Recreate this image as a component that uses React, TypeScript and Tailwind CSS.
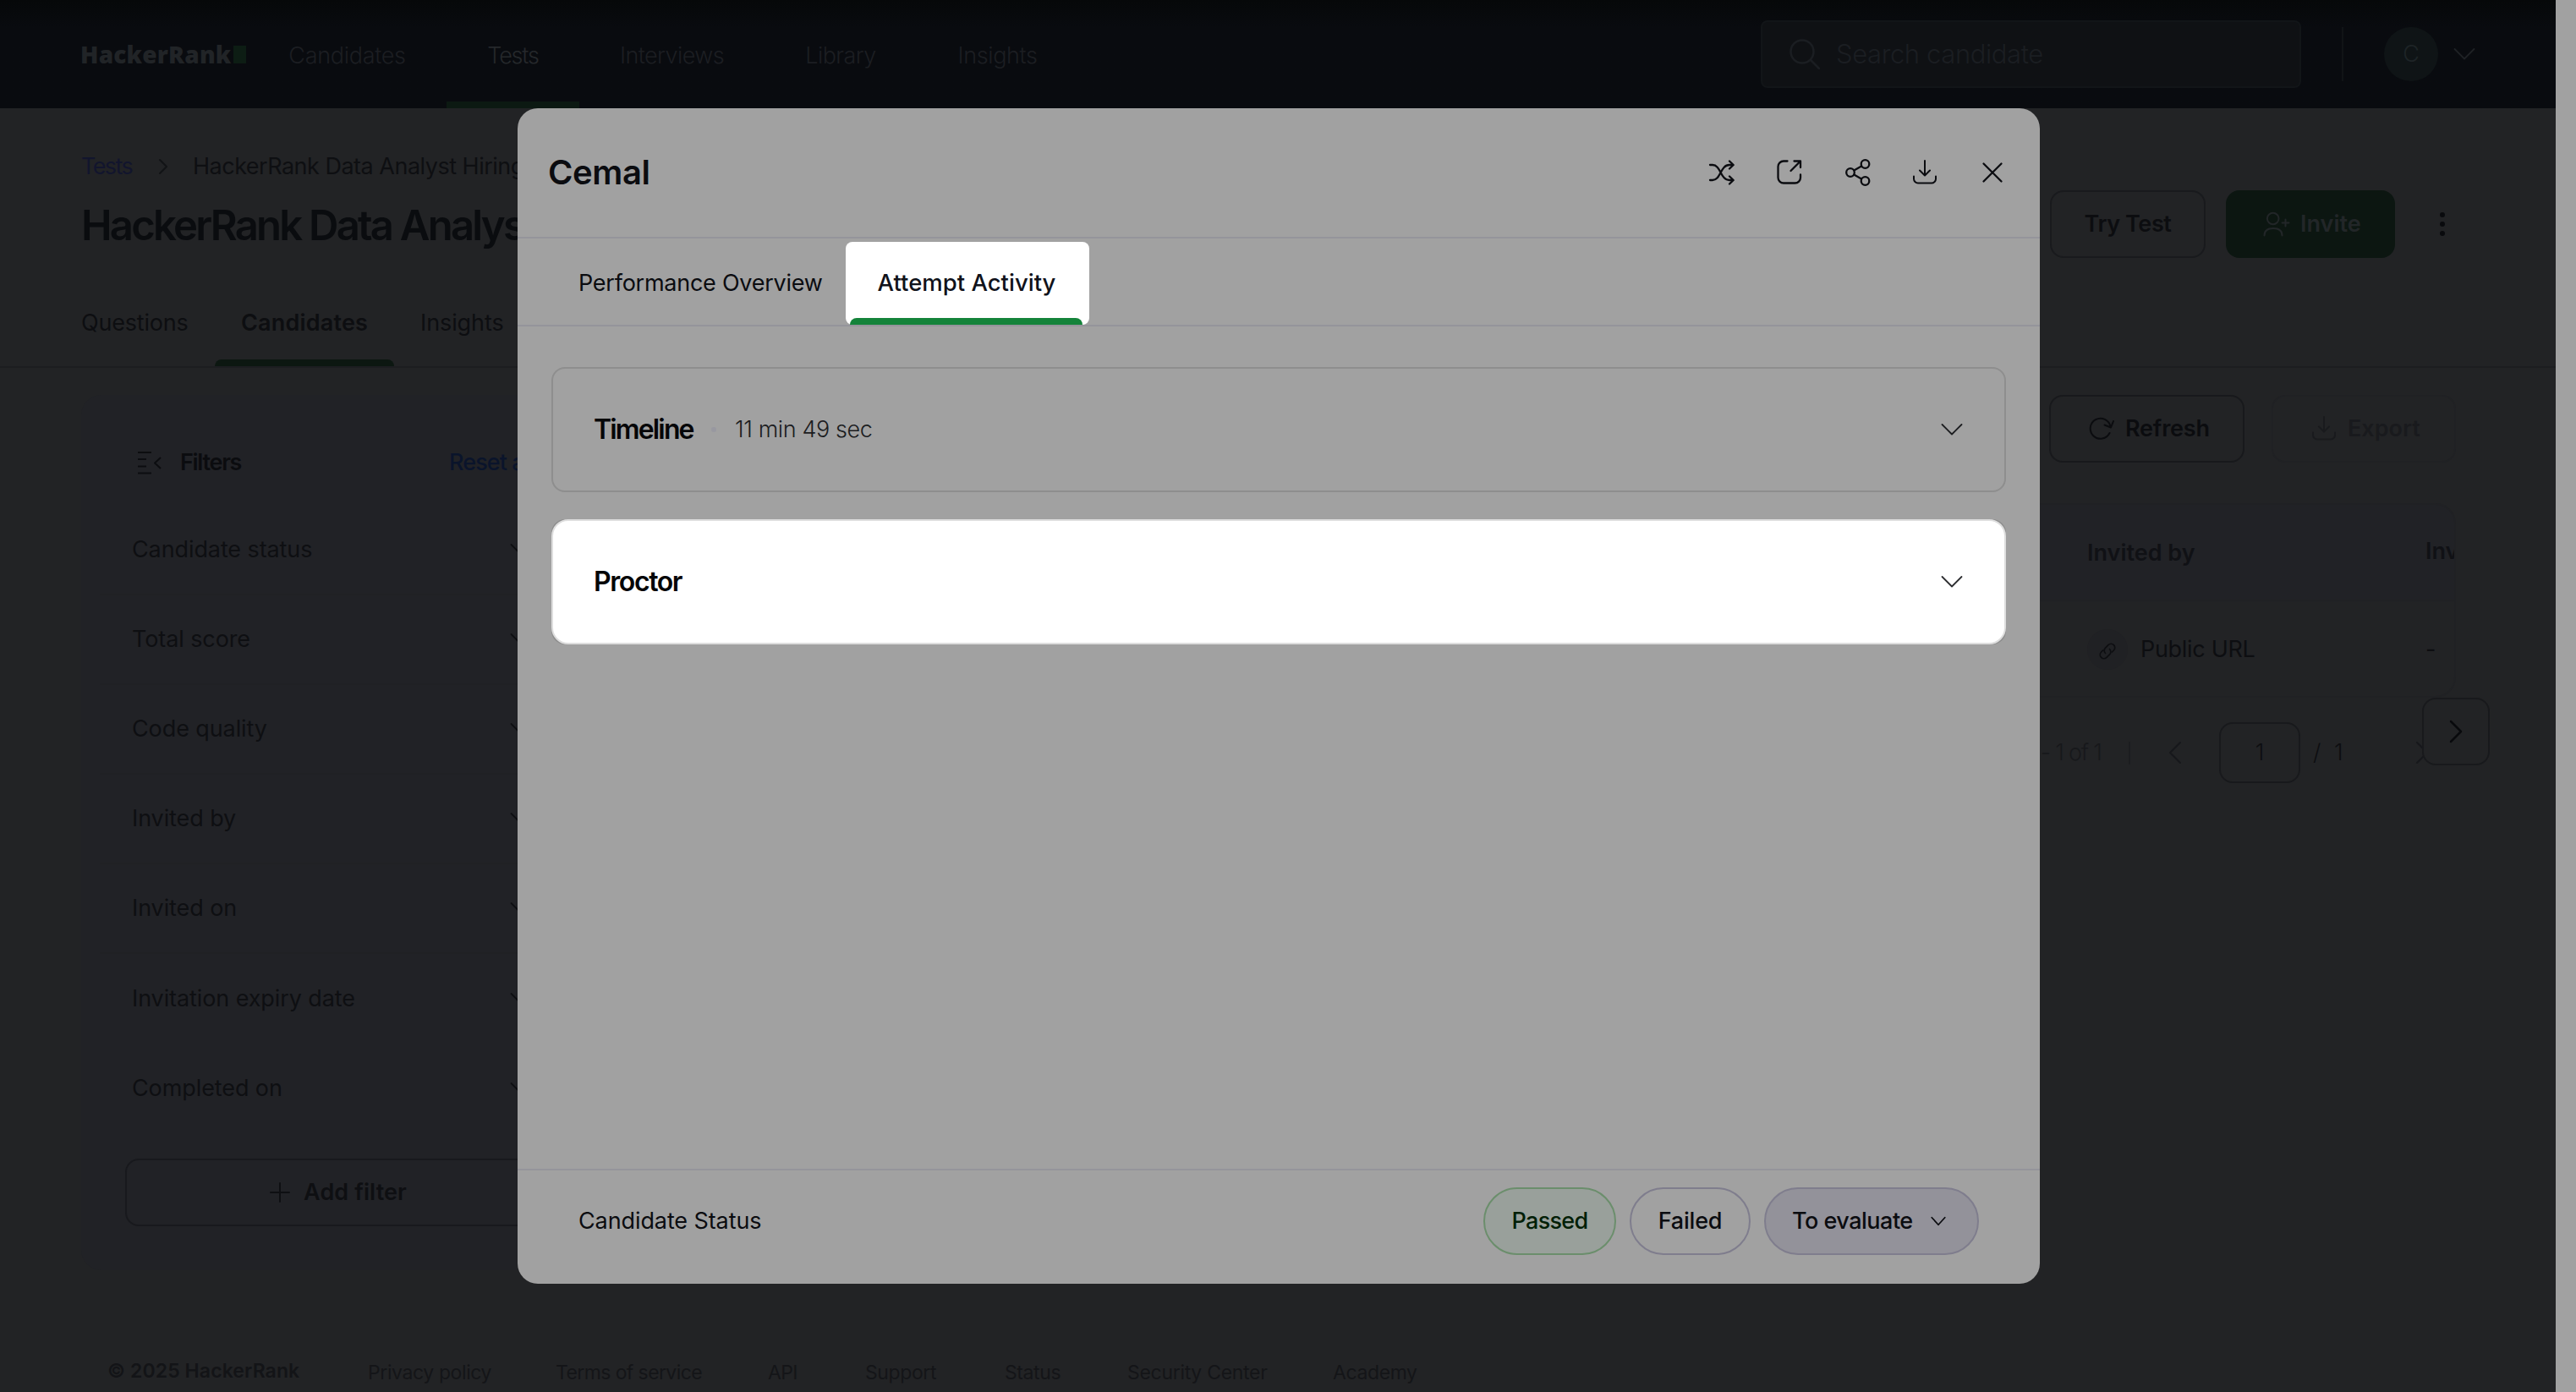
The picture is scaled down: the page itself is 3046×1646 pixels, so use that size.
import type { ReactNode } from "react";

type IconProps = { className?: string; children: ReactNode; box?: string };

function Icon({ className = "", children, box = "0 0 32 32" }: IconProps) {
  return (
    <svg viewBox={box} className={"shrink-0 " + className} fill="none" stroke="currentColor" strokeWidth="2" strokeLinecap="round" strokeLinejoin="round">
      {children}
    </svg>
  );
}

function ChevronDown({ className }: { className: string }) {
  return (
    <Icon className={className} box="0 0 28 16">
      <path d="M2.500 2l11.500 11.500L25.500 2" strokeWidth="1.800" />
    </Icon>
  );
}

function DownloadIcon({ className }: { className: string }) {
  return (
    <Icon className={className}>
      <path d="M16 2v17M10 13.500l6 6 6-6M3 20.500v3a5 5 0 0 0 5 5h16a5 5 0 0 0 5-5v-3" />
    </Icon>
  );
}

const navItems = [
  { label: "Candidates", box: "w-[235px] tracking-[-0.3px]", active: false },
  { label: "Tests", box: "w-[157px] tracking-[-1.2px]", active: true },
  { label: "Interviews", box: "w-[219px] tracking-[-0.6px]", active: false },
  { label: "Library", box: "w-[180px] tracking-[-0.6px]", active: false },
  { label: "Insights", box: "w-[191px] tracking-[-0.4px]", active: false },
];

function TopBar() {
  return (
    <header className="flex h-32 shrink-0 items-center bg-[#090b0e] bg-linear-to-b from-[#060809] to-[#090b0f] to-25% pl-[95px] text-[#1c1e22]">
      <div className="flex w-[198px] shrink-0 items-center">
        <span className="w-[181px] font-['Open_Sans'] text-[28px] leading-8 font-extrabold tracking-[0.2px] whitespace-nowrap text-[#212427]">HackerRank</span>
        <span className="h-[21px] w-[15px] bg-[#0d1d14]" />
      </div>
      <nav className="flex h-full">
        {navItems.map((item) => (
          <div key={item.label} className={"relative flex items-center justify-center pt-1 font-light " + item.box + (item.active ? " text-[#25282b]" : "")}>
            {item.label}
            {item.active && <span className="absolute inset-x-0 bottom-0 h-2 bg-[#0c1912]" />}
          </div>
        ))}
      </nav>
      <div className="ml-auto flex items-center">
        <div className="flex h-20 w-[639px] items-center gap-[19px] rounded-lg border-2 border-[#121518] bg-[#0f1114] pl-8">
          <Icon className="h-9 w-9 text-[#1b1e22]" box="0 0 36 36">
            <circle cx="15" cy="15" r="13.500" strokeWidth="2.500" />
            <path d="M25 25l10 10" strokeWidth="2.500" />
          </Icon>
          <span className="text-[31px] font-light tracking-[-0.4px] text-[#1b1e22]">Search candidate</span>
        </div>
        <span className="ml-12 h-16 w-[2px] bg-[#111416]" />
        <span className="ml-12 flex h-16 w-16 items-center justify-center rounded-full bg-[#0f1416] font-light text-[#1e2427]">C</span>
        <ChevronDown className="mr-[94px] ml-[17px] h-4 w-7 text-[#1f2225]" />
      </div>
    </header>
  );
}

function PageHeader() {
  return (
    <section className="flex h-[307px] shrink-0 flex-col border-b-2 border-[#1c1d20] pl-24">
      <div className="mt-[49px] flex h-10 items-center tracking-[-0.5px] whitespace-nowrap">
        <span className="w-[63px] tracking-[-1.6px] text-[#12152d]">Tests</span>
        <Icon className="ml-7 h-5 w-3" box="0 0 12 20">
          <path d="M2 2l8 8-8 8" stroke="#121316" />
        </Icon>
        <span className="ml-[29px] text-[#0e0f12]">HackerRank Data Analyst Hiring Test</span>
      </div>
      <div className="mt-2 flex h-20 items-center">
        <h1 className="mt-1 w-[2328px] overflow-hidden text-[49px] leading-[64px] font-semibold tracking-[-2.750px] whitespace-nowrap text-[#0a0c0f]">HackerRank Data Analyst Hiring Test</h1>
        <div className="flex h-20 w-[184px] shrink-0 items-center justify-center rounded-2xl border-2 border-[#191a1d] font-semibold tracking-[-0.4px] text-[#0c0d10]">Try Test</div>
        <div className="ml-6 flex h-20 w-[200px] shrink-0 items-center rounded-2xl bg-[#0c1611] pl-[42px] font-semibold text-[#222628]">
          <Icon className="h-8 w-8 overflow-visible">
            <circle cx="13.700" cy="9.500" r="6.800" />
            <path d="M3.500 29.500c0-5.500 4-8.500 10.500-8.500s10.500 3 10.500 8.500M24.500 14.500h8M28.500 10.500v8" />
          </Icon>
          <span className="ml-[14px]">Invite</span>
        </div>
        <div className="ml-[53px] flex flex-col gap-[5px]">
          <span className="h-[6px] w-[6px] rounded-full bg-[#090a0d]" />
          <span className="h-[6px] w-[6px] rounded-full bg-[#090a0d]" />
          <span className="h-[6px] w-[6px] rounded-full bg-[#090a0d]" />
        </div>
      </div>
      <div className="mt-6 flex h-[104px] items-center text-[#0d0e11]">
        <span className="w-[158px] pt-[2px] tracking-[-0.2px]">Questions</span>
        <div className="relative flex h-full w-[212px] items-center justify-center pt-[2px] font-semibold tracking-[0.2px]">
          Candidates
          <span className="absolute inset-x-0 bottom-0 h-2 rounded-t-lg bg-[#0c1711]" />
        </div>
        <span className="pt-[2px] pl-[31px] tracking-[-0.1px]">Insights</span>
      </div>
    </section>
  );
}

const filters = ["Candidate status", "Total score", "Code quality", "Invited by", "Invited on", "Invitation expiry date", "Completed on"];

function FilterPanel() {
  return (
    <aside className="mt-8 flex h-[1035px] w-[608px] shrink-0 flex-col rounded-3xl bg-[#212226] text-[#0e0f12]">
      <div className="flex h-[131px] items-center pt-[29px] pl-16">
        <Icon className="h-7 w-8 text-[#0c0d10]" box="0 0 32 28">
          <path d="M3 2h16M3 10h10M3 18.500h10M3 26.500h16M30 8l-7 6.500 7 6.500" strokeLinecap="butt" />
        </Icon>
        <span className="ml-[21px] font-semibold tracking-[-1.300px] text-[#0b0c0f]">Filters</span>
        <span className="ml-auto w-[173px] font-medium tracking-[-0.900px] text-[#0a142b]">Reset all</span>
      </div>
      {filters.map((name, i) => (
        <div key={name} className={"ml-[22px] flex h-[106px] shrink-0 items-center pl-[38px] tracking-[-0.100px] " + (i < 5 ? "border-b-2 border-[#202124]" : "")}>
          <span className="w-[446px]">{name}</span>
          <ChevronDown className="h-4 w-7 text-[#0e0f12]" />
        </div>
      ))}
      <div className="mt-[30px] ml-[52px] flex h-20 w-[504px] shrink-0 items-center justify-center gap-4 rounded-2xl border-2 border-[#18191d] font-semibold tracking-[0.100px]">
        <Icon className="h-6 w-6" box="0 0 24 24">
          <path d="M12 1v22M1 12h22" />
        </Icon>
        <span>Add filter</span>
      </div>
    </aside>
  );
}

function Results() {
  return (
    <section className="flex w-[2200px] shrink-0 flex-col pt-8 text-[#0d0e11]">
      <div className="flex justify-end gap-8">
        <div className="flex h-20 w-[231px] items-center rounded-2xl border-2 border-[#18191c] pl-[44px] font-semibold text-[#0b0c0f]">
          <Icon className="h-8 w-8">
            <path d="M25.500 21a12 12 0 1 1 1-7.500M19.500 11.500l7.500 3 3-7.500" />
          </Icon>
          <span className="ml-3 tracking-[-0.200px]">Refresh</span>
        </div>
        <div className="flex h-20 w-[218px] items-center rounded-2xl border-2 border-[#202124] pl-[44px] font-semibold text-[#191a1d]">
          <DownloadIcon className="h-8 w-8" />
          <span className="ml-3">Export</span>
        </div>
      </div>
      <div className="mt-12 h-[230px] w-[2200px] overflow-hidden rounded-3xl border-2 border-[#202124]">
        <div className="flex h-[114px] items-center border-b-2 border-[#202124] bg-[#212226] pl-[1762px] font-semibold whitespace-nowrap text-[#101115]">
          <span className="w-[400px] shrink-0 pt-[2px]">Invited by</span>
          <span className="pb-[2px]">Invited on</span>
        </div>
        <div className="flex h-[114px] items-center pl-[1762px]">
          <span className="flex h-12 w-12 items-center justify-center rounded-full bg-[#202124]">
            <Icon className="mt-1 h-6 w-6" box="0 0 24 24">
              <path d="M9.500 14.500a4.500 4.500 0 0 1 0-6.400l3.500-3.500a4.500 4.500 0 0 1 6.400 6.400l-2 2M14.500 9.500a4.500 4.500 0 0 1 0 6.400L11 19.400A4.500 4.500 0 0 1 4.600 13l2-2" strokeWidth="1.700" />
            </Icon>
          </span>
          <span className="w-[352px] pl-[15px] tracking-[-0.3px]">Public URL</span>
          <span>-</span>
        </div>
      </div>
      <div className="mt-[29px] flex h-[72px] items-center pl-[1693px] font-light">
        <span className="w-[120px] tracking-[-1.200px] whitespace-nowrap text-[#17181b]">1 - 1 of 1</span>
        <span className="h-[27px] w-[2px] bg-[#1c1d20]" />
        <Icon className="ml-[43px] h-7 w-5 text-[#17181b]" box="0 0 20 28">
          <path d="M16 2L4 14l12 12" />
        </Icon>
        <span className="ml-[42px] flex h-[72px] w-24 items-center justify-center rounded-2xl border-2 border-[#18191c]">1</span>
        <span className="ml-[15px] w-[25px]">/</span>
        <span className="w-[94px]">1</span>
        <Icon className="h-7 w-5 text-[#17181b]" box="0 0 20 28">
          <path d="M4 2l12 12L4 26" />
        </Icon>
      </div>
    </section>
  );
}

const links = [
  { label: "Privacy policy", box: "w-[222px] tracking-[-0.4px]" },
  { label: "Terms of service", box: "w-[251px] tracking-[-0.6px]" },
  { label: "API", box: "w-[115px] tracking-[-0.6px]" },
  { label: "Support", box: "w-[165px] tracking-[-0.4px]" },
  { label: "Status", box: "w-[145px] tracking-[-0.4px]" },
  { label: "Security Center", box: "w-[243px] tracking-[-0.3px]" },
  { label: "Academy", box: "tracking-[-0.4px]" },
];

function Footer() {
  return (
    <footer className="mt-[101px] flex h-10 items-center pl-[127px] text-[23px] text-[#141518]">
      <span className="w-[308px] pb-[5px] font-semibold whitespace-nowrap tracking-[0.100px] text-[#131417]">© 2025 HackerRank</span>
      {links.map((l) => (
        <span key={l.label} className={l.box}>{l.label}</span>
      ))}
    </footer>
  );
}

function ReportModal() {
  return (
    <div className="absolute top-32 left-[612px] flex h-[1390px] w-[1800px] flex-col overflow-hidden rounded-3xl bg-[#a1a1a1] text-[#0b0c10]">
      <div className="flex h-[154px] shrink-0 items-center justify-between border-b-2 border-[#94949b] pr-10 pl-[36px]">
        <h2 className="text-[40px] leading-none font-semibold tracking-[-0.400px]">Cemal</h2>
        <div className="flex gap-12">
          <Icon className="h-8 w-8">
            <path strokeWidth="2.300" d="M2 7h3c10 0 9 18 20 18h4M2 25h3c10 0 9-18 20-18h4M25 2.500L29.700 7 25 11.500M25 20.500l4.700 4.500-4.700 4.500" />
          </Icon>
          <Icon className="h-8 w-8">
            <path strokeWidth="2.300" d="M13.500 2.500H9A6.500 6.500 0 0 0 2.500 9v13A6.500 6.500 0 0 0 9 28.500h13.500a6.500 6.500 0 0 0 6.500-6.500v-3.500M21.500 2.500H29V10M29 2.500L17.500 14" />
          </Icon>
          <Icon className="h-8 w-8">
            <g strokeWidth="2.300">
              <circle cx="8" cy="16" r="4.800" />
              <circle cx="25.500" cy="6" r="4.800" />
              <circle cx="25.500" cy="26" r="4.800" />
              <path d="M12.300 13.500l8.700-5M12.300 18.500l8.700 5" />
            </g>
          </Icon>
          <DownloadIcon className="h-8 w-8" />
          <Icon className="h-8 w-8">
            <path strokeWidth="2.300" d="M5.500 5.500l21 21M26.500 5.500l-21 21" />
          </Icon>
        </div>
      </div>
      <div className="flex h-[104px] shrink-0 border-b-2 border-[#94949b] pl-[72px]">
        <div className="flex w-[316px] items-center pt-[3px] tracking-[-0.250px]">Performance Overview</div>
        <div className="relative mt-1 flex h-[98px] w-[288px] items-center justify-center rounded-lg bg-white pr-[2px] pb-[3px] text-[27.500px] font-medium text-[#10121a]">
          Attempt Activity
          <span className="absolute right-2 bottom-0 left-[5px] h-2 rounded-t-lg bg-[#14833a]" />
        </div>
      </div>
      <div className="flex grow flex-col gap-8 px-10 pt-12">
        <div className="flex h-[148px] items-center rounded-2xl border-2 border-[#8e8e8e] pr-12 pl-12">
          <span className="w-[139px] text-[32px] font-semibold tracking-[-1.850px] text-[#060608]">Timeline</span>
          <span className="h-[6px] w-[6px] rounded-full bg-[#9898a0]" />
          <span className="ml-[22px] font-light tracking-[-0.4px] text-[#1c1d1f]">11 min 49 sec</span>
          <ChevronDown className="ml-auto h-4 w-7 text-[#1c1d20]" />
        </div>
        <div className="rounded-2xl bg-[#8e8e8e]">
          <div className="flex h-[148px] items-center rounded-[20px] border-2 border-[#dedede] bg-white pr-12 pl-12">
            <span className="text-[32px] font-semibold tracking-[-1.400px] text-[#060608]">Proctor</span>
            <ChevronDown className="ml-auto h-4 w-7 text-[#2c2d30]" />
          </div>
        </div>
      </div>
      <div className="flex h-[136px] shrink-0 items-center gap-4 border-t-2 border-[#94949b] pr-[72px] pb-[14px] pl-[72px]">
        <span className="grow tracking-[-0.100px]">Candidate Status</span>
        <span className="flex h-20 w-[157px] items-center justify-center rounded-full border-2 border-[#6b8e6c] bg-[#99a09b] font-medium tracking-[-0.700px] text-[#031f07]">Passed</span>
        <span className="flex h-20 w-[143px] items-center justify-center rounded-full border-2 border-[#7f7d8d] font-medium tracking-[-0.200px]">Failed</span>
        <span className="flex h-20 w-[254px] items-center gap-[18px] rounded-full border-2 border-[#7f7d8d] bg-[#93929a] pl-[31px] font-medium tracking-[-0.5px]">
          To evaluate
          <Icon className="h-3 w-6" box="0 0 24 14">
            <path d="M3 2l9 10 9-10" />
          </Icon>
        </span>
      </div>
    </div>
  );
}

export default function App() {
  return (
    <div className="relative flex h-[1646px] w-[3046px] overflow-hidden bg-[#222325] font-[Inter,sans-serif] text-[27px] leading-10">
      <div className="flex w-[3022px] shrink-0 flex-col overflow-hidden">
        <TopBar />
        <PageHeader />
        <div className="flex h-[1067px] shrink-0 pl-24">
          <FilterPanel />
          <Results />
        </div>
        <Footer />
      </div>
      <div className="grow bg-[#a1a1a1]" />
      <ReportModal />
      <div className="absolute top-[825px] left-[2864px] flex h-20 w-20 items-center justify-center rounded-2xl border-2 border-[#18191c] bg-[#222325] text-[#090a0d]">
        <Icon className="h-7 w-5" box="0 0 20 28">
          <path d="M4 2l12 12L4 26" strokeWidth="2.500" />
        </Icon>
      </div>
    </div>
  );
}
